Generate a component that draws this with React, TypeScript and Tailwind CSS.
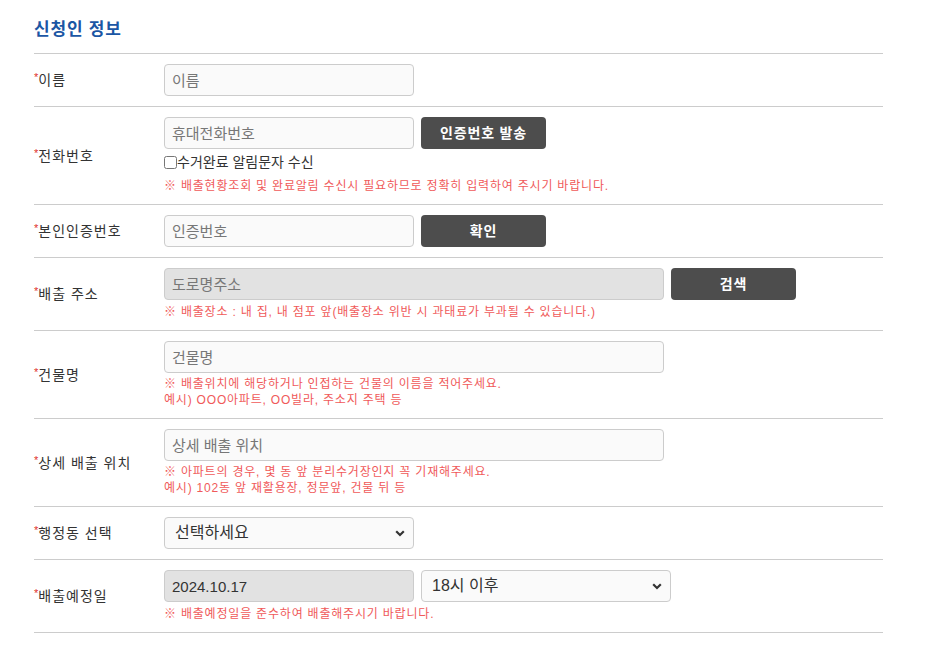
import React from "react";

const font = { fontFamily: '"Liberation Sans", "Noto Sans CJK KR", sans-serif' };

function Label({ text }: { text: string }) {
  return (
    <div className="flex items-center text-[14px] text-[#333] leading-[20px] tracking-[1px]">
      <span className="text-[#e0302c] text-[11px] self-start leading-[14px] tracking-normal">*</span>
      <span>{text}</span>
    </div>
  );
}

function Note({ lines, className = "" }: { lines: string[]; className?: string }) {
  return (
    <div className={`text-[12px] leading-[16px] tracking-[0.8px] text-[#f05a5a] ${className}`}>
      {lines.map((l) => (
        <div key={l}>{l}</div>
      ))}
    </div>
  );
}

function TextInput({
  placeholder,
  wide,
  gray,
  value,
}: {
  placeholder?: string;
  wide?: boolean;
  gray?: boolean;
  value?: string;
}) {
  return (
    <input
      type="text"
      readOnly={!!value || gray}
      defaultValue={value}
      placeholder={placeholder}
      className={`${wide ? "w-[500px]" : "w-[250px]"} h-[32px] rounded-[4px] border border-[#cccccc] px-[7px] text-[15px] text-[#333] placeholder:text-[#777] outline-none ${
        gray ? "bg-[#e2e2e2]" : "bg-[#fafafa]"
      }`}
      style={font}
    />
  );
}

function Button({ text }: { text: string }) {
  return (
    <button className="ml-[7px] w-[125px] h-[32px] rounded-[4px] bg-[#4d4d4d] text-white text-[14px] font-bold tracking-[0.8px]">
      {text}
    </button>
  );
}

function Select({ value }: { value: string }) {
  return (
    <div className="relative w-[250px] h-[32px]">
      <select
        defaultValue={value}
        className="appearance-none w-full h-full rounded-[4px] border border-[#cccccc] bg-[#fafafa] pl-[10px] text-[16px] text-[#333] outline-none"
        style={font}
      >
        <option>{value}</option>
      </select>
      <svg
        className="absolute right-[9px] top-[13px] pointer-events-none"
        width="10"
        height="7"
        viewBox="0 0 10 7"
      >
        <path d="M1.2 1.3 L5 5 L8.8 1.3" fill="none" stroke="#333" strokeWidth="2.2" />
      </svg>
    </div>
  );
}

function Row({ label, children }: { label: string; children: React.ReactNode }) {
  return (
    <div className="grid grid-cols-[130px_1fr] items-center border-b border-[#cccccc] py-[10px]">
      <Label text={label} />
      <div>{children}</div>
    </div>
  );
}

export default function App() {
  return (
    <div className="min-h-[670px] bg-white" style={font}>
      <div className="ml-[34px] w-[849px]">
        <h2 className="pt-[18px] pb-[11px] leading-[24px] text-[17px] font-bold tracking-[0.8px] text-[#1b56a4] border-b border-[#cccccc]">
          신청인 정보
        </h2>

        <Row label="이름">
          <TextInput placeholder="이름" />
        </Row>

        <Row label="전화번호">
          <div className="flex">
            <TextInput placeholder="휴대전화번호" />
            <Button text="인증번호 발송" />
          </div>
          <label className="mt-[3px] flex items-center text-[14px] leading-[20px] text-[#333]">
            <input type="checkbox" className="m-0 w-[13px] h-[13px]" />
            <span>수거완료 알림문자 수신</span>
          </label>
          <Note
            className="mt-[6px]"
            lines={["※ 배출현황조회 및 완료알림 수신시 필요하므로 정확히 입력하여 주시기 바랍니다."]}
          />
        </Row>

        <Row label="본인인증번호">
          <div className="flex">
            <TextInput placeholder="인증번호" />
            <Button text="확인" />
          </div>
        </Row>

        <Row label="배출 주소">
          <div className="flex">
            <TextInput placeholder="도로명주소" wide gray />
            <Button text="검색" />
          </div>
          <Note
            className="mt-[4px]"
            lines={["※ 배출장소 : 내 집, 내 점포 앞(배출장소 위반 시 과태료가 부과될 수 있습니다.)"]}
          />
        </Row>

        <Row label="건물명">
          <TextInput placeholder="건물명" wide />
          <Note
            className="mt-[3px]"
            lines={[
              "※ 배출위치에 해당하거나 인접하는 건물의 이름을 적어주세요.",
              "예시) OOO아파트, OO빌라, 주소지 주택 등",
            ]}
          />
        </Row>

        <Row label="상세 배출 위치">
          <TextInput placeholder="상세 배출 위치" wide />
          <Note
            className="mt-[3px]"
            lines={[
              "※ 아파트의 경우, 몇 동 앞 분리수거장인지 꼭 기재해주세요.",
              "예시) 102동 앞 재활용장, 정문앞, 건물 뒤 등",
            ]}
          />
        </Row>

        <Row label="행정동 선택">
          <Select value="선택하세요" />
        </Row>

        <Row label="배출예정일">
          <div className="flex gap-[7px]">
            <TextInput value="2024.10.17" gray />
            <Select value="18시 이후" />
          </div>
          <Note className="mt-[4px]" lines={["※ 배출예정일을 준수하여 배출해주시기 바랍니다."]} />
        </Row>
      </div>
    </div>
  );
}
